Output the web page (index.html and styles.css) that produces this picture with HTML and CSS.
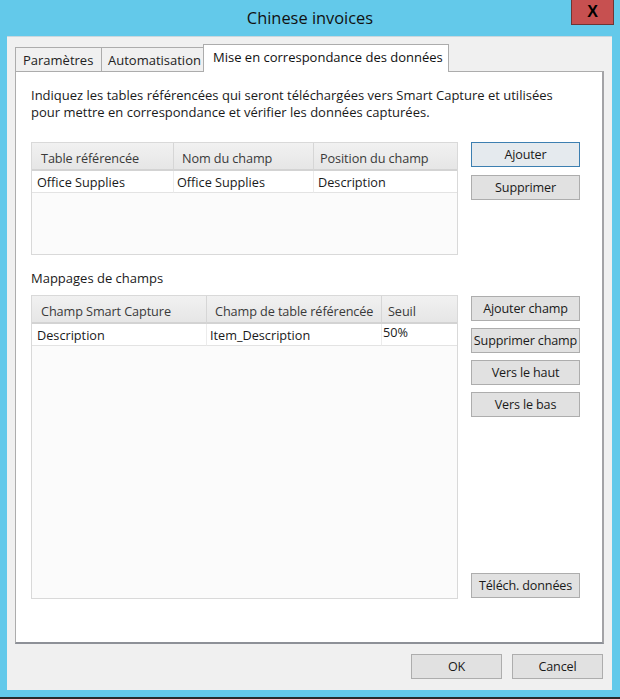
FILE: index.html
```html
<!DOCTYPE html>
<html lang="fr">
<head>
<meta charset="utf-8">
<title>Chinese invoices</title>
<link rel="stylesheet" href="styles.css">
</head>
<body>
<div class="frame">
  <div class="titlebar">
    <span class="title">Chinese invoices</span>
    <div class="close">X</div>
  </div>
  <div class="client">
    <div class="tabs">
      <div class="tab">Paramètres</div>
      <div class="tab">Automatisation</div>
      <div class="tab active">Mise en correspondance des données</div>
    </div>
    <div class="panel">
      <p class="intro">Indiquez les tables référencées qui seront téléchargées vers Smart Capture et utilisées<br>pour mettre en correspondance et vérifier les données capturées.</p>
      <div class="section s1">
        <div class="grid g1">
          <div class="hd first">Table référencée</div>
          <div class="hd">Nom du champ</div>
          <div class="hd last">Position du champ</div>
          <div class="cell first">Office Supplies</div>
          <div class="cell">Office Supplies</div>
          <div class="cell last">Description</div>
        </div>
        <div class="btns">
          <button class="btn default">Ajouter</button>
          <button class="btn">Supprimer</button>
        </div>
      </div>
      <div class="label">Mappages de champs</div>
      <div class="section s2">
        <div class="grid g2">
          <div class="hd first">Champ Smart Capture</div>
          <div class="hd">Champ de table référencée</div>
          <div class="hd last">Seuil</div>
          <div class="cell first">Description</div>
          <div class="cell">Item_Description</div>
          <div class="cell last edit">50%</div>
        </div>
        <div class="btns">
          <button class="btn">Ajouter champ</button>
          <button class="btn">Supprimer champ</button>
          <button class="btn">Vers le haut</button>
          <button class="btn">Vers le bas</button>
          <button class="btn push">Téléch. données</button>
        </div>
      </div>
    </div>
    <div class="footer">
      <button class="btn wide">OK</button>
      <button class="btn wide">Cancel</button>
    </div>
  </div>
  <div class="bottom"></div>
</div>
</body>
</html>
```

FILE: styles.css
```css
* { box-sizing: border-box; }

html, body {
  margin: 0;
  padding: 0;
}

body {
  width: 620px;
  height: 699px;
  background: #63c9ea;
  font-family: "Segoe UI", "Open Sans", "Noto Sans", sans-serif;
  font-size: 13px;
  color: #1a1a1a;
  overflow: hidden;
}

.frame {
  display: flex;
  flex-direction: column;
  width: 620px;
  height: 699px;
}

.titlebar {
  height: 36px;
  display: flex;
  align-items: flex-start;
  justify-content: center;
  position: relative;
}

.title {
  margin-top: 6px;
  font-size: 16.4px;
  color: #111;
}

.close {
  position: absolute;
  left: 571px;
  top: 0;
  width: 43px;
  height: 25px;
  background: #c75050;
  border: 1px solid #6e3535;
  border-top: none;
  display: flex;
  align-items: center;
  justify-content: center;
  font-family: "Liberation Sans", Arial, sans-serif;
  font-weight: bold;
  font-size: 16px;
  color: #000;
}

.client {
  margin-left: 7px;
  width: 605px;
  height: 654px;
  background: #f0f0f0;
  border-top: 1px solid #c9d7de;
  padding-top: 7px;
  display: flex;
  flex-direction: column;
}

.tabs {
  height: 27px;
  margin-left: 8px;
  display: flex;
  align-items: flex-end;
}

.tab {
  height: 24px;
  padding: 0 6px;
  border: 1px solid #acacac;
  border-bottom: none;
  background: #f0f0f0;
  display: flex;
  align-items: center;
  color: #222;
  margin-right: -1px;
  position: relative;
  white-space: nowrap;
}

.tab:first-child { width: 87px; padding-left: 7px; }
.tab:nth-child(2) { width: 103px; padding-left: 6px; }

.tab.active {
  height: 28px;
  width: 246px;
  margin-bottom: -1px;
  background: #fff;
  z-index: 2;
  padding-left: 9px;
  padding-bottom: 3px;
  color: #111;
}

.panel {
  margin: 0 8px;
  height: 573px;
  background: #fff;
  border: 1px solid #acacac;
  border-right: 2px solid #a3a3a6;
  border-bottom: 2px solid #8d9097;
  padding: 15px 0 0 15px;
  display: flex;
  flex-direction: column;
}

.intro {
  margin: 0;
  line-height: 17px;
  color: #1a1a1a;
  white-space: nowrap;
}

.section {
  display: flex;
  gap: 13px;
}

.s1 {
  margin-top: 21px;
  height: 113px;
}

.s2 {
  margin-top: 9px;
  height: 304px;
}

.label {
  margin-top: 15px;
  line-height: 16px;
}

.grid {
  width: 427px;
  height: 100%;
  background: #fbfbfb;
  border: 1px solid #d9d9d9;
  display: grid;
  grid-template-rows: 28px 22px;
  align-content: start;
  font-size: 12.7px;
}

.g1 { grid-template-columns: 142px 140px 1fr; }
.g2 { grid-template-columns: 175px 175px 1fr; }

.hd {
  background: linear-gradient(#f1f1f1, #e6e6e6);
  border-bottom: 2px solid #d3d3d3;
  border-right: 1px solid #d6d6d6;
  padding: 7px 0 0 8px;
  line-height: 16px;
  color: #3a3a3a;
  white-space: nowrap;
  overflow: hidden;
  letter-spacing: -0.1px;
}

.hd.first { padding-left: 9px; }
.hd.last { border-right: none; padding-left: 6px; }

.cell {
  border-bottom: 1px solid #e3e3e3;
  border-right: 1px solid #ececec;
  background: #fff;
  padding: 3px 0 0 3px;
  line-height: 16px;
  white-space: nowrap;
  overflow: hidden;
}

.cell.first { padding-left: 5px; }
.cell.last { border-right: none; padding-left: 4px; }
.cell.edit { padding-top: 0; padding-left: 1px; }

.btns {
  width: 109px;
  display: flex;
  flex-direction: column;
  gap: 7px;
}

.s1 .btns { gap: 8px; }
.s2 .btns { padding-top: 1px; padding-bottom: 1px; }

.btn {
  height: 25px;
  width: 109px;
  background: #e1e1e1;
  border: 1px solid #adadad;
  font-family: inherit;
  font-size: 12.6px;
  letter-spacing: -0.15px;
  color: #1a1a1a;
  padding: 0;
  margin: 0;
  white-space: nowrap;
  overflow: hidden;
}

.btn.default {
  border-color: #3c7fb1;
  background: #e5eaee;
}

.btn.push { margin-top: auto; }

.footer {
  display: flex;
  justify-content: flex-end;
  gap: 10px;
  margin-top: 10px;
  padding-right: 9px;
}

.btn.wide { width: 91px; }

.bottom {
  height: 7px;
  border-bottom: 2px solid #2a2a2a;
  box-sizing: content-box;
}
```
